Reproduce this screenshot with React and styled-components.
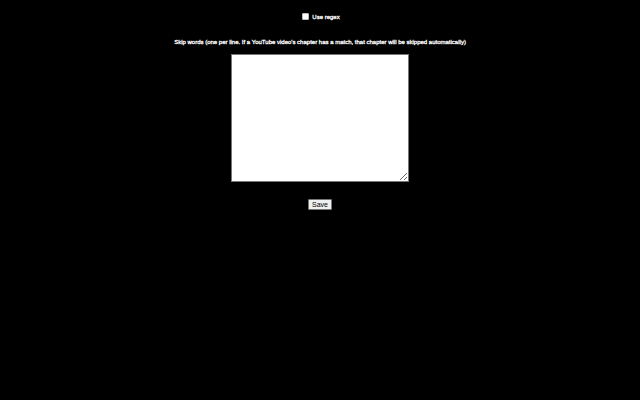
import styled, { createGlobalStyle } from "styled-components";

const GlobalStyle = createGlobalStyle`
  html, body {
    margin: 0;
    padding: 0;
    background: #000;
  }
  body {
    width: 640px;
    height: 400px;
    overflow: hidden;
    font-family: "Liberation Sans", Arial, sans-serif;
  }
`;

const Page = styled.div`
  width: 640px;
  height: 400px;
  background: #000;
  display: flex;
  flex-direction: column;
  align-items: center;
  padding-top: 13px;
  box-sizing: border-box;
`;

const CheckRow = styled.label`
  display: flex;
  align-items: center;
  gap: 3px;
  color: #fff;
  font-size: 6px;
  margin-left: 2px;
  -webkit-text-stroke: 0.3px #fff;
`;

const Box = styled.input`
  width: 7px;
  height: 7px;
  margin: 0;
  appearance: none;
  background: #fff;
  border: 1px solid #bbb;
  border-radius: 1px;
  box-sizing: border-box;
`;

const Hint = styled.p`
  margin: 19px 0 9px;
  color: #fff;
  font-size: 6px;
  white-space: nowrap;
  -webkit-text-stroke: 0.3px #fff;
`;

const WordsArea = styled.textarea`
  width: 178px;
  height: 128px;
  box-sizing: border-box;
  margin: 0;
  border: 1px solid #767676;
  background: #fff;
  resize: both;
`;

const SaveButton = styled.button`
  margin-top: 17px;
  height: 11px;
  padding: 0 3px;
  font-family: "Liberation Sans", Arial, sans-serif;
  font-size: 7px;
  color: #000;
  background: #efefef;
  border: 1px solid #767676;
  border-radius: 1px;
  line-height: 9px;
`;

export default function App() {
  return (
    <>
      <GlobalStyle />
      <Page>
        <CheckRow>
          <Box type="checkbox" />
          Use regex
        </CheckRow>
        <Hint>
          Skip words (one per line. If a YouTube video's chapter has a match, that chapter will be skipped automatically)
        </Hint>
        <WordsArea />
        <SaveButton>Save</SaveButton>
      </Page>
    </>
  );
}
